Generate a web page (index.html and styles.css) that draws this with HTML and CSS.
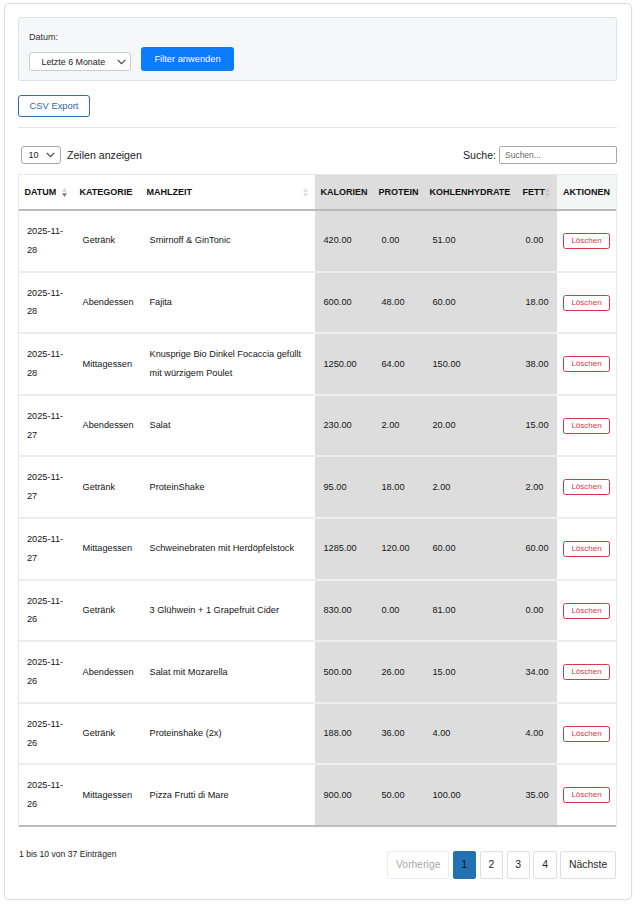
FILE: index.html
```html
<!DOCTYPE html>
<html lang="de">
<head>
<meta charset="utf-8">
<title>Mahlzeiten</title>
<link rel="stylesheet" href="styles.css">
</head>
<body>
<div class="card">
  <div class="filter">
    <div class="filter-label">Datum:</div>
    <div class="filter-row">
      <div class="select select-range"><span>Letzte 6 Monate</span><svg class="chev" width="9" height="6" viewBox="0 0 9 6"><polyline points="0.7,0.8 4.5,4.6 8.3,0.8" fill="none" stroke="#444" stroke-width="1.2"/></svg></div>
      <button class="btn-primary" type="button">Filter anwenden</button>
    </div>
  </div>
  <button class="btn-outline" type="button">CSV Export</button>
  <div class="sep"></div>
  <div class="dt-controls">
    <div class="length">
      <div class="select select-len"><span>10</span><svg class="chev" width="9" height="6" viewBox="0 0 9 6"><polyline points="0.7,0.8 4.5,4.6 8.3,0.8" fill="none" stroke="#444" stroke-width="1.2"/></svg></div>
      <span class="length-text">Zeilen anzeigen</span>
    </div>
    <label class="search">Suche: <input type="text" placeholder="Suchen..."></label>
  </div>
  <table class="dt">
    <colgroup>
      <col class="c-date"><col class="c-cat"><col class="c-meal"><col class="c-kal"><col class="c-pro"><col class="c-kh"><col class="c-fett"><col class="c-act">
    </colgroup>
    <thead>
      <tr>
        <th><span class="th-text">DATUM</span><svg class="sort" width="5" height="9" viewBox="0 0 5 9"><polygon points="0,3.8 2.5,0 5,3.8" fill="#d2d2d2"/><polygon points="0,5.2 2.5,9 5,5.2" fill="#7a7a7a"/></svg></th>
        <th><span class="th-text">KATEGORIE</span><svg class="sort" width="5" height="9" viewBox="0 0 5 9"><polygon points="0,3.8 2.5,0 5,3.8" fill="#e2e2e2"/><polygon points="0,5.2 2.5,9 5,5.2" fill="#e2e2e2"/></svg></th>
        <th><span class="th-text">MAHLZEIT</span><svg class="sort" width="5" height="9" viewBox="0 0 5 9"><polygon points="0,3.8 2.5,0 5,3.8" fill="#dcdcdc"/><polygon points="0,5.2 2.5,9 5,5.2" fill="#dcdcdc"/></svg></th>
        <th class="g"><span class="th-text">KALORIEN</span><svg class="sort" width="5" height="9" viewBox="0 0 5 9"><polygon points="0,3.8 2.5,0 5,3.8" fill="#c8c8c8"/><polygon points="0,5.2 2.5,9 5,5.2" fill="#c8c8c8"/></svg></th>
        <th class="g"><span class="th-text">PROTEIN</span><svg class="sort" width="5" height="9" viewBox="0 0 5 9"><polygon points="0,3.8 2.5,0 5,3.8" fill="#c8c8c8"/><polygon points="0,5.2 2.5,9 5,5.2" fill="#c8c8c8"/></svg></th>
        <th class="g"><span class="th-text">KOHLENHYDRATE</span><svg class="sort" width="5" height="9" viewBox="0 0 5 9"><polygon points="0,3.8 2.5,0 5,3.8" fill="#c8c8c8"/><polygon points="0,5.2 2.5,9 5,5.2" fill="#c8c8c8"/></svg></th>
        <th class="g"><span class="th-text">FETT</span><svg class="sort" width="5" height="9" viewBox="0 0 5 9"><polygon points="0,3.8 2.5,0 5,3.8" fill="#c8c8c8"/><polygon points="0,5.2 2.5,9 5,5.2" fill="#c8c8c8"/></svg></th>
        <th class="act">AKTIONEN</th>
      </tr>
    </thead>
    <tbody>
      <tr><td>2025-11-28</td><td>Getränk</td><td>Smirnoff &amp; GinTonic</td><td class="g">420.00</td><td class="g">0.00</td><td class="g">51.00</td><td class="g">0.00</td><td class="act"><button class="btn-del" type="button">Löschen</button></td></tr>
      <tr><td>2025-11-28</td><td>Abendessen</td><td>Fajita</td><td class="g">600.00</td><td class="g">48.00</td><td class="g">60.00</td><td class="g">18.00</td><td class="act"><button class="btn-del" type="button">Löschen</button></td></tr>
      <tr><td>2025-11-28</td><td>Mittagessen</td><td>Knusprige Bio Dinkel Focaccia gefüllt mit würzigem Poulet</td><td class="g">1250.00</td><td class="g">64.00</td><td class="g">150.00</td><td class="g">38.00</td><td class="act"><button class="btn-del" type="button">Löschen</button></td></tr>
      <tr><td>2025-11-27</td><td>Abendessen</td><td>Salat</td><td class="g">230.00</td><td class="g">2.00</td><td class="g">20.00</td><td class="g">15.00</td><td class="act"><button class="btn-del" type="button">Löschen</button></td></tr>
      <tr><td>2025-11-27</td><td>Getränk</td><td>ProteinShake</td><td class="g">95.00</td><td class="g">18.00</td><td class="g">2.00</td><td class="g">2.00</td><td class="act"><button class="btn-del" type="button">Löschen</button></td></tr>
      <tr><td>2025-11-27</td><td>Mittagessen</td><td>Schweinebraten mit Herdöpfelstock</td><td class="g">1285.00</td><td class="g">120.00</td><td class="g">60.00</td><td class="g">60.00</td><td class="act"><button class="btn-del" type="button">Löschen</button></td></tr>
      <tr><td>2025-11-26</td><td>Getränk</td><td>3 Glühwein + 1 Grapefruit Cider</td><td class="g">830.00</td><td class="g">0.00</td><td class="g">81.00</td><td class="g">0.00</td><td class="act"><button class="btn-del" type="button">Löschen</button></td></tr>
      <tr><td>2025-11-26</td><td>Abendessen</td><td>Salat mit Mozarella</td><td class="g">500.00</td><td class="g">26.00</td><td class="g">15.00</td><td class="g">34.00</td><td class="act"><button class="btn-del" type="button">Löschen</button></td></tr>
      <tr><td>2025-11-26</td><td>Getränk</td><td>Proteinshake (2x)</td><td class="g">188.00</td><td class="g">36.00</td><td class="g">4.00</td><td class="g">4.00</td><td class="act"><button class="btn-del" type="button">Löschen</button></td></tr>
      <tr><td>2025-11-26</td><td>Mittagessen</td><td>Pizza Frutti di Mare</td><td class="g">900.00</td><td class="g">50.00</td><td class="g">100.00</td><td class="g">35.00</td><td class="act"><button class="btn-del" type="button">Löschen</button></td></tr>
    </tbody>
  </table>
  <div class="dt-footer">
    <div class="info">1 bis 10 von 37 Einträgen</div>
    <div class="pager">
      <span class="pg disabled">Vorherige</span>
      <span class="pg active">1</span>
      <span class="pg">2</span>
      <span class="pg">3</span>
      <span class="pg">4</span>
      <span class="pg">Nächste</span>
    </div>
  </div>
</div>
</body>
</html>
```

FILE: styles.css
```css
* { box-sizing: border-box; }
html, body { margin: 0; padding: 0; background: #fff; }
body {
  font-family: "Liberation Sans", Arial, sans-serif;
  color: #1e1e1e;
}
.card {
  width: 628px;
  margin: 3px 0 0 4px;
  border: 1px solid #dcdcdc;
  border-radius: 5px;
  padding: 13px 14px 20px 13px;
  box-shadow: 0 1px 3px rgba(0,0,0,0.06);
}
.filter {
  background: #f6f7f9;
  border: 1px solid #dfe2e6;
  border-radius: 3px;
  padding: 13px 10px 9px 10px;
  height: 64px;
}
.filter-label {
  font-size: 9px;
  line-height: 12px;
  color: #333;
  margin-bottom: 4px;
}
.filter-row {
  display: flex;
  align-items: flex-end;
  gap: 10px;
}
.select {
  display: flex;
  align-items: center;
  justify-content: space-between;
  background: #fff;
  border: 1px solid #c9cdd2;
  border-radius: 3px;
}
.select-range {
  width: 102px;
  height: 19px;
  padding: 0 4px 0 11.5px;
  font-size: 8.9px;
  color: #222;
}
.chev { display: block; }
.btn-primary {
  width: 93px;
  height: 24px;
  background: #0b7cfb;
  border: none;
  border-radius: 3px;
  color: #fff;
  font-family: "Liberation Sans", Arial, sans-serif;
  font-size: 9.3px;
  padding: 0;
  margin-bottom: 0;
}
.btn-outline {
  display: block;
  margin-top: 14px;
  width: 72px;
  height: 21.5px;
  background: #fff;
  border: 1px solid #2c6fb3;
  border-radius: 3px;
  color: #2f69a8;
  font-family: "Liberation Sans", Arial, sans-serif;
  font-size: 9.4px;
  padding: 0;
}
.sep {
  height: 1px;
  background: #e6e6e6;
  margin-top: 10.5px;
}
.dt-controls {
  margin-top: 18px;
  height: 18px;
  display: flex;
  justify-content: space-between;
  align-items: center;
}
.length {
  display: flex;
  align-items: center;
  gap: 6px;
  margin-left: 3px;
}
.select-len {
  width: 40px;
  height: 18px;
  border-color: #a9a9a9;
  padding: 0 5px 0 6.5px;
  font-size: 9px;
  color: #222;
}
.length-text, .search {
  font-size: 10.6px;
  color: #222;
}
.search {
  display: flex;
  align-items: center;
  gap: 3px;
}
.search input {
  width: 118px;
  height: 18px;
  border: 1px solid #a9a9a9;
  border-radius: 2px;
  padding: 0 5px;
  font-family: "Liberation Sans", Arial, sans-serif;
  font-size: 8.5px;
  margin: 0;
}
.search input::placeholder { color: #666; }

.dt {
  margin-top: 10px;
  width: 599px;
  table-layout: fixed;
  border-collapse: separate;
  border-spacing: 0;
  border-top: 1px solid #e8e8e8;
  border-left: 1px solid #e8e8e8;
  border-right: 1px solid #e8e8e8;
  font-size: 9.2px;
  color: #141414;
}
.c-date { width: 55px; }
.c-cat { width: 67px; }
.c-meal { width: 174px; }
.c-kal { width: 58px; }
.c-pro { width: 51px; }
.c-kh { width: 93px; }
.c-fett { width: 40px; }
.c-act { width: 59px; }

.dt th {
  position: relative;
  text-align: left;
  font-size: 9px;
  font-weight: bold;
  line-height: 12px;
  padding: 11px 4px 11px 5.5px;
  white-space: nowrap;
  background: #fff;
  border-bottom: 2px solid #b9b9b9;
  color: #111;
}
.th-text { position: relative; z-index: 2; }
.dt th.g { background: #dddddd; }
.dt th.act { background: #f4f6f6; padding-left: 6px; }
.sort {
  position: absolute;
  z-index: 1;
  right: 7px;
  top: 50%;
  margin-top: -4.5px;
  display: block;
}
.dt td {
  padding: 11px 6px 11px 8.5px;
  line-height: 18.8px;
  vertical-align: middle;
  border-bottom: 2px solid #ececec;
  background: #fff;
}
.dt td:first-child { padding-right: 7px; padding-left: 8px; }
.dt td.g { background: #dddddd; border-bottom-color: #eeeeee; }
.dt td.act { padding-left: 6px; padding-right: 4px; }
.dt tbody tr:last-child td { border-bottom-color: #bdbdbd; }
.btn-del {
  display: inline-block;
  vertical-align: middle;
  width: 47px;
  height: 16px;
  padding: 0;
  background: #fff;
  border: 1px solid #dc3545;
  border-radius: 2.5px;
  color: #dc3545;
  font-family: "Liberation Sans", Arial, sans-serif;
  font-size: 8px;
  line-height: 14px;
}

.dt-footer {
  margin-top: 24px;
  display: flex;
  justify-content: space-between;
  align-items: flex-start;
}
.info {
  font-size: 8.6px;
  line-height: 12px;
  margin-top: -3px;
  margin-left: 1px;
  color: #1e1e1e;
}
.pager {
  display: flex;
  gap: 3.5px;
  margin-right: 1px;
}
.pg {
  display: block;
  height: 28px;
  line-height: 26px;
  padding: 0 7.8px;
  border: 1px solid #dedede;
  border-radius: 2px;
  font-size: 10.4px;
  color: #1e1e1e;
  background: #fff;
}
.pg.disabled { color: #a8a8a8; border-color: #ececec; }
.pg.active { background: #2271b1; border-color: #2271b1; color: #141414; }
```
